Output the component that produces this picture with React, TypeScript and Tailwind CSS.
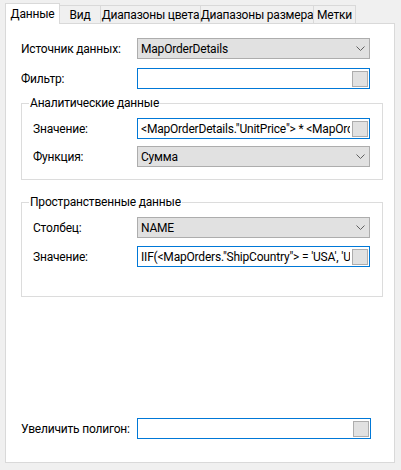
import React from "react";

const FONT = { fontFamily: 'Roboto, "Noto Sans", "Liberation Sans", sans-serif' };

function Chevron() {
  return (
    <svg width="9" height="5" viewBox="0 0 9 5" className="shrink-0">
      <polyline points="0.5,0.5 4.5,4.5 8.5,0.5" fill="none" stroke="#606060" strokeWidth="1" />
    </svg>
  );
}

function Combo({ value }: { value: string }) {
  return (
    <div className="w-[233px] h-[21px] flex items-center justify-between border border-[#adadad] bg-[#e1e1e1] pl-[3px] pr-[4px]">
      <span className="whitespace-nowrap">{value}</span>
      <Chevron />
    </div>
  );
}

function TextBox({ value = "", wide = false }: { value?: string; wide?: boolean }) {
  return (
    <div
      className={
        (wide ? "w-[234px]" : "w-[233px]") +
        " h-[21px] flex items-center border border-[#0078d7] bg-white pl-[3px] pr-[1px]"
      }
    >
      <span className="flex-1 overflow-hidden whitespace-nowrap">{value}</span>
      <div className="w-[16px] h-[16px] shrink-0 ml-[2px] border border-[#adadad] bg-[#e1e1e1]" />
    </div>
  );
}

function Row({ label, labelW, children }: { label: string; labelW: string; children: React.ReactNode }) {
  return (
    <div className="flex items-center h-[21px]">
      <div className={labelW + " shrink-0 whitespace-nowrap"}>{label}</div>
      {children}
    </div>
  );
}

const tabs = ["Вид", "Диапазоны цвета", "Диапазоны размера", "Метки"];
const tabW = ["w-[42px]", "w-[101px]", "w-[114px]", "w-[43px]"];

export default function App() {
  return (
    <div className="w-[401px] h-[470px] bg-[#f0f0f0] px-[5px] pt-[2px] text-[12px] text-[#000] tracking-[-0.2px]" style={FONT}>
      {/* Tabs */}
      <div className="flex items-end h-[21px]">
        <div className="w-[55px] h-[21px] -mb-px relative z-10 flex items-center justify-center whitespace-nowrap border border-b-0 border-[#d9d9d9] bg-white">
          Данные
        </div>
        {tabs.map((t, i) => (
          <div
            key={t}
            className={tabW[i] + " h-[18px] -ml-px flex items-center justify-center whitespace-nowrap border border-b-0 border-[#d9d9d9] bg-[#f0f0f0]"}
          >
            {t}
          </div>
        ))}
      </div>

      {/* Panel */}
      <div className="w-[390px] h-[440px] border border-[#d9d9d9] bg-white flex flex-col px-[15px]">
        <div className="mt-[14px]">
          <Row label="Источник данных:" labelW="w-[116px]">
            <Combo value="MapOrderDetails" />
          </Row>
        </div>
        <div className="mt-[9px]">
          <Row label="Фильтр:" labelW="w-[116px]">
            <TextBox />
          </Row>
        </div>

        <fieldset className="mt-[6px] w-[362px] border border-[#dcdcdc]">
          <legend className="ml-[7px] px-[1px] leading-[16px]">Аналитические данные</legend>
          <div className="pl-[11px] pt-[7px] pb-[12px] flex flex-col gap-[7px]">
            <Row label="Значение:" labelW="w-[104px]">
              <TextBox value={'<MapOrderDetails."UnitPrice"> * <MapOrderDetails."Quantity">'} />
            </Row>
            <Row label="Функция:" labelW="w-[104px]">
              <Combo value="Сумма" />
            </Row>
          </div>
        </fieldset>

        <fieldset className="mt-[14px] w-[362px] border border-[#dcdcdc]">
          <legend className="ml-[7px] px-[1px] leading-[16px]">Пространственные данные</legend>
          <div className="pl-[11px] pt-[7px] pb-[29px] flex flex-col gap-[8px]">
            <Row label="Столбец:" labelW="w-[104px]">
              <Combo value="NAME" />
            </Row>
            <Row label="Значение:" labelW="w-[104px]">
              <TextBox value={"IIF(<MapOrders.\"ShipCountry\"> = 'USA', 'USA', 'Other')"} />
            </Row>
          </div>
        </fieldset>

        <div className="mt-auto mb-[23px]">
          <Row label="Увеличить полигон:" labelW="w-[116px]">
            <TextBox wide />
          </Row>
        </div>
      </div>
    </div>
  );
}
